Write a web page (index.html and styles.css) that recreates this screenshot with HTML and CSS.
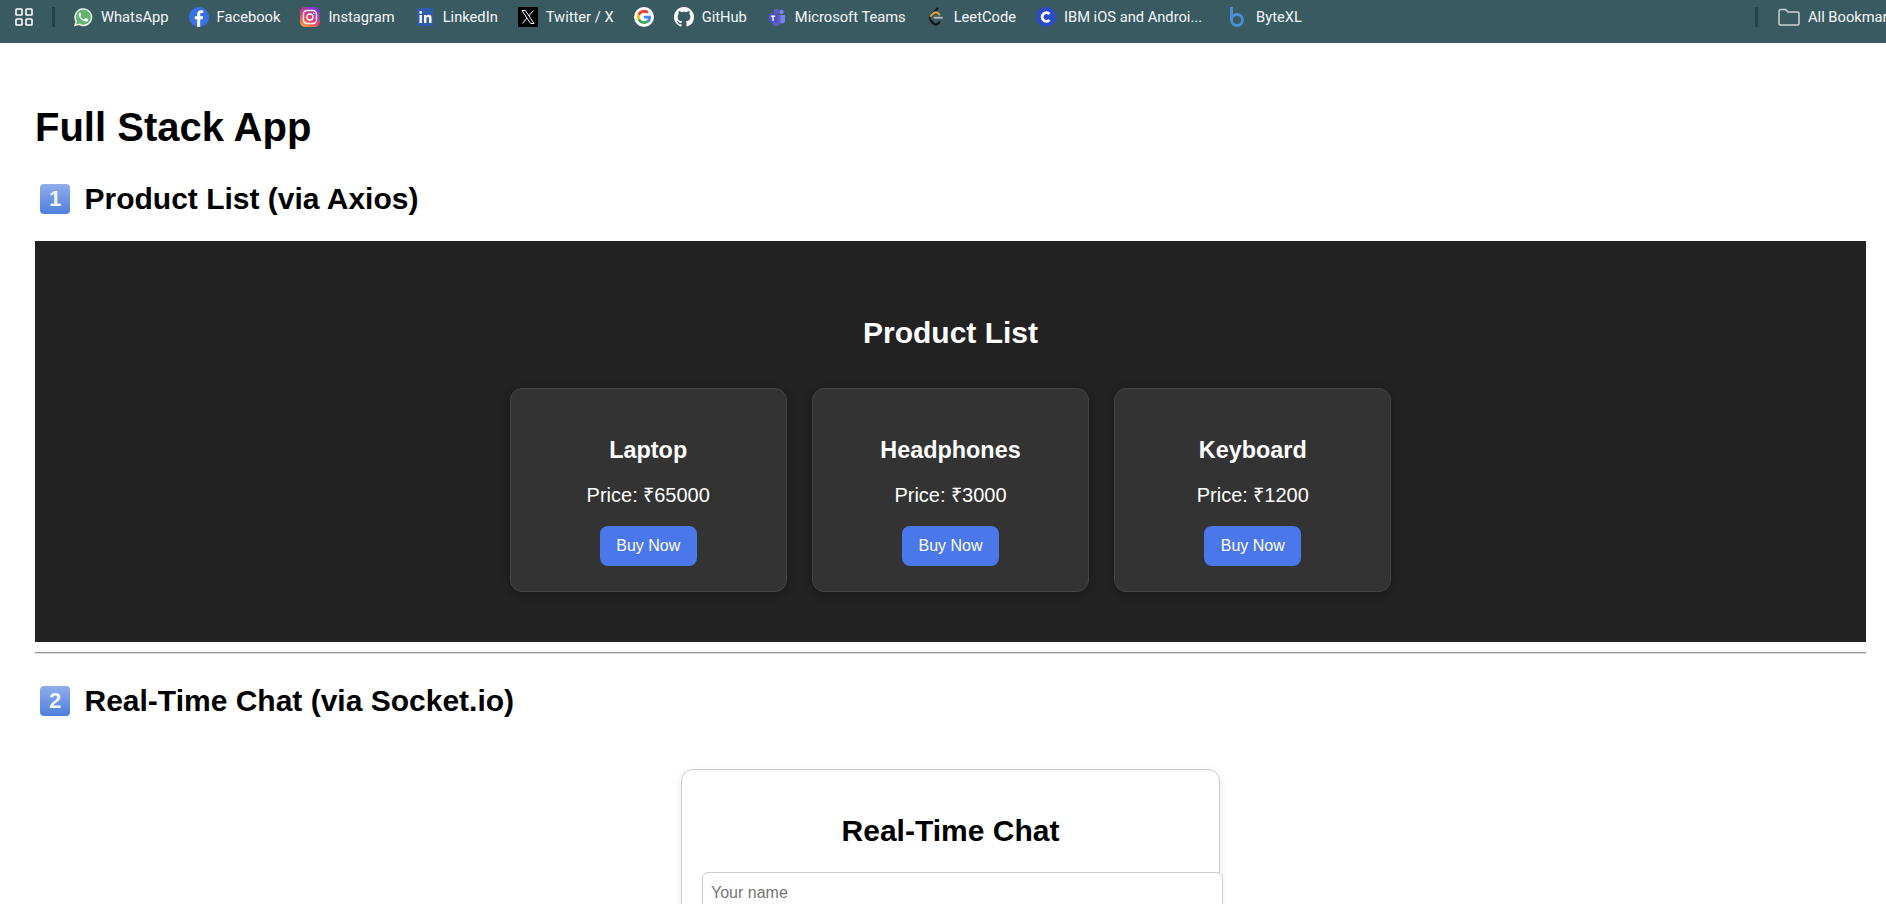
FILE: index.html
```html
<!DOCTYPE html>
<html lang="en">
<head>
<meta charset="utf-8">
<title>Full Stack App</title>
<link rel="stylesheet" href="styles.css">
</head>
<body>
<nav class="bookmarks">
  <div class="bm-left">
    <svg class="apps" viewBox="0 0 18 18" width="18" height="18" fill="none" stroke="#fff" stroke-width="1.6"><rect x="1" y="1" width="6" height="6" rx=".8"/><rect x="11" y="1" width="6" height="6" rx=".8"/><rect x="1" y="11" width="6" height="6" rx=".8"/><rect x="11" y="11" width="6" height="6" rx=".8"/></svg>
    <span class="sep"></span>
    <a class="bm"><svg viewBox="0 0 20 20" width="20" height="20"><path d="M1 19.500l1.400-5A9 9 0 1 1 5.800 18z" fill="#f2f6f2"/><path d="M3 17.500l1-3.300A7.500 7.500 0 1 1 6.300 16.500z" fill="#62b56f"/><path d="M7.300 5.600c-.5 0-1.500.8-1.500 2.300 0 1.700 1.300 3.400 2.800 4.700 1.500 1.300 3.200 2 4.300 2 1.200 0 2.200-1 2.200-1.900 0-.5-.1-.6-.4-.7l-1.900-.9c-.3-.1-.5 0-.7.300l-.7.900c-.2.200-.4.200-.7.100-1.400-.6-2.600-1.700-3.300-3-.1-.3 0-.4.200-.6l.5-.7c.1-.2.100-.4 0-.6l-.8-1.900c-.1-.3-.3-.4-.5-.4z" fill="#fff"/></svg><span>WhatsApp</span></a>
    <a class="bm"><svg viewBox="0 0 20 20" width="20" height="20"><circle cx="10" cy="10" r="10" fill="#3b6fe8"/><path d="M11.200 20v-7.800h2.500l.4-3h-2.900V7.500c0-.9.300-1.400 1.500-1.400h1.500V3.400c-.3 0-1.200-.1-2.200-.1-2.300 0-3.800 1.300-3.800 3.800v2.100H5.800v3h2.400V20z" fill="#fff"/></svg><span>Facebook</span></a>
    <a class="bm"><svg viewBox="0 0 20 20" width="20" height="20"><defs><linearGradient id="ig" x1="0" y1="1" x2=".6" y2="0"><stop offset="0" stop-color="#f9b233"/><stop offset=".5" stop-color="#e8406a"/><stop offset="1" stop-color="#7a35d0"/></linearGradient></defs><rect width="20" height="20" rx="5" fill="url(#ig)"/><rect x="3.500" y="3.500" width="13" height="13" rx="3.500" fill="none" stroke="#fff" stroke-width="1.400"/><circle cx="10" cy="10" r="3" fill="none" stroke="#fff" stroke-width="1.400"/><circle cx="13.800" cy="6.200" r=".8" fill="#fff"/></svg><span>Instagram</span></a>
    <a class="bm"><svg viewBox="0 0 20 20" width="20" height="20"><rect x="2" y="1" width="16" height="18" fill="#2f5ba8"/><rect x="4.500" y="8" width="2.400" height="8" fill="#fff"/><circle cx="5.700" cy="5.500" r="1.400" fill="#fff"/><path d="M9 8h2.300v1.100C11.800 8.300 12.700 7.800 13.700 7.800c2 0 2.800 1.200 2.800 3.200v5h-2.400v-4.500c0-1-.3-1.600-1.200-1.600-1 0-1.500.7-1.500 1.700V16H9z" fill="#fff"/></svg><span>LinkedIn</span></a>
    <a class="bm"><svg viewBox="0 0 20 20" width="20" height="20"><rect width="20" height="20" fill="#000"/><path d="M4 3.500h3.400l8.600 13h-3.400zM15.500 3.500L10.800 9M9 11l-4.600 5.500" fill="none" stroke="#fff" stroke-width="1"/></svg><span>Twitter / X</span></a>
    <a class="bm"><svg viewBox="0 0 20 20" width="20" height="20"><circle cx="10" cy="10" r="10" fill="#fff"/><path d="M17 10.200c0-.6-.1-1-.2-1.400H10v2.700h3.900c-.2 1-.7 1.700-1.400 2.200l2.200 1.700c1.400-1.200 2.300-3 2.300-5.200z" fill="#4285f4"/><path d="M10 17c1.900 0 3.500-.6 4.700-1.700l-2.200-1.700c-.6.400-1.500.7-2.500.7-1.900 0-3.500-1.300-4.100-3l-2.300 1.800C4.800 15.400 7.200 17 10 17z" fill="#34a853"/><path d="M5.900 11.300a4.300 4.300 0 0 1 0-2.700L3.600 6.800a7 7 0 0 0 0 6.300z" fill="#fbbc05"/><path d="M10 5.700c1.100 0 2 .4 2.800 1.100l2-2A7 7 0 0 0 3.600 6.800l2.300 1.800c.6-1.700 2.200-2.900 4.100-2.900z" fill="#ea4335"/></svg></a>
    <a class="bm"><svg viewBox="0 0 16 16" width="20" height="20"><path d="M8 0C3.580 0 0 3.580 0 8c0 3.540 2.290 6.530 5.470 7.590.4.070.55-.17.55-.38 0-.19-.01-.82-.01-1.490-2.010.37-2.530-.49-2.690-.94-.09-.23-.48-.94-.82-1.130-.28-.15-.68-.52-.01-.53.63-.01 1.080.58 1.230.82.72 1.210 1.870.87 2.330.66.070-.52.28-.87.51-1.070-1.780-.2-3.640-.89-3.640-3.950 0-.87.31-1.590.82-2.150-.08-.2-.36-1.020.08-2.120 0 0 .67-.21 2.200.82.64-.18 1.320-.27 2-.27.68 0 1.360.090 2 .27 1.530-1.040 2.200-.82 2.200-.82.44 1.100.16 1.920.08 2.120.51.56.82 1.270.82 2.150 0 3.070-1.870 3.750-3.650 3.950.29.25.54.73.54 1.480 0 1.070-.01 1.930-.01 2.200 0 .21.15.46.55.38A8.013 8.013 0 0016 8c0-4.420-3.580-8-8-8z" fill="#fff"/></svg><span>GitHub</span></a>
    <a class="bm"><svg viewBox="0 0 20 20" width="20" height="20"><circle cx="14.500" cy="5" r="2.200" fill="#7b83eb"/><path d="M11.500 8h6.500v5.500a3 3 0 0 1-6 0z" fill="#7b83eb"/><circle cx="9.500" cy="4.500" r="2.700" fill="#5b5fc7"/><path d="M5.500 8h8v7a4 4 0 0 1-8 0z" fill="#5b5fc7"/><rect x="1.500" y="6.500" width="9" height="9" rx="1" fill="#4b53bc"/><rect x="5.300" y="9" width="1.400" height="5" fill="#fff"/><rect x="3.800" y="8.500" width="4.400" height="1.300" fill="#fff"/></svg><span>Microsoft Teams</span></a>
    <a class="bm"><svg viewBox="0 0 20 20" width="20" height="20" fill="none" stroke-width="2" stroke-linecap="round" stroke-linejoin="round"><path d="M11.500 1.500L4.500 9" stroke="#111"/><path d="M4.500 9c-1.200 1.500-1 3.200.2 4.500" stroke="#222"/><path d="M4.700 13.500l2.800 3c1.300 1.300 3.200 1.300 4.600 0l1.400-1.300" stroke="#111"/><path d="M4.700 9l2.800-2.700c1.200-1.200 3.200-1.200 4.500 0l1.400 1.300" stroke="#e0a33a"/><path d="M8.500 10.800h7.500" stroke="#b3b3b3"/></svg><span>LeetCode</span></a>
    <a class="bm"><svg viewBox="0 0 20 20" width="20" height="20"><circle cx="10" cy="10" r="10" fill="#2c4ac8"/><path d="M13.500 7a4.300 4.300 0 1 0 0 6" fill="none" stroke="#fff" stroke-width="2.800"/></svg><span>IBM iOS and Androi...</span></a>
    <a class="bm bm-byte"><svg viewBox="0 0 20 20" width="20" height="20" fill="none" stroke="#4a90d9" stroke-width="2.800"><path d="M3.500 0v13"/><circle cx="9" cy="13" r="5.500"/></svg><span>ByteXL</span></a>
  </div>
  <div class="bm-right">
    <span class="sep"></span>
    <a class="bm"><svg viewBox="0 0 22 18" width="22" height="18" fill="none" stroke="#c8d2d4" stroke-width="1.500"><path d="M1 3a1.500 1.500 0 0 1 1.500-1.500h5l2.500 2.500h9.500A1.500 1.500 0 0 1 21 5.500v10a1.500 1.500 0 0 1-1.500 1.500h-17A1.500 1.500 0 0 1 1 15.500z"/></svg><span>All Bookmarks</span></a>
  </div>
</nav>
<main class="page">
  <h1>Full Stack App</h1>
  <h2 class="section"><span class="keycap">1</span>Product List (via Axios)</h2>
  <section class="products">
    <h2>Product List</h2>
    <div class="cards">
      <article class="card"><h3>Laptop</h3><p>Price: ₹65000</p><button>Buy Now</button></article>
      <article class="card"><h3>Headphones</h3><p>Price: ₹3000</p><button>Buy Now</button></article>
      <article class="card"><h3>Keyboard</h3><p>Price: ₹1200</p><button>Buy Now</button></article>
    </div>
  </section>
  <hr>
  <h2 class="section"><span class="keycap">2</span>Real-Time Chat (via Socket.io)</h2>
  <section class="chat">
    <h2>Real-Time Chat</h2>
    <input type="text" placeholder="Your name">
  </section>
</main>
</body>
</html>
```
FILE: styles.css
```css
html, body { margin: 0; height: 904px; overflow: hidden; background: #fff; }
body { font-family: "Liberation Sans", Arial, sans-serif; font-size: 20px; color: #000; }

.bookmarks { height: 43px; box-sizing: border-box; padding-bottom: 9px; background: #3a5a62; display: grid; grid-template-columns: 1755px auto; align-items: center; overflow: hidden; white-space: nowrap; color: #f4f7f8; font-family: Roboto, sans-serif; font-size: 14.700px; }
.bm-left, .bm-right { display: flex; align-items: center; }
.bm-left { padding-left: 15px; }
.apps { margin-right: 19px; }
.sep { width: 3px; height: 20px; background: #24424a; flex: none; }
.bm-left .sep { margin-right: 18px; }
.bm-right .sep { margin-right: 20px; }
.bm { display: flex; align-items: center; gap: 8px; margin-right: 20px; flex: none; }
.bm svg { flex: none; }
.bm-byte { margin-left: 6px; }

.page { padding: 0 20px 35px 35px; }
h1 { font-size: 40px; line-height: 46px; margin: 61px 0 30px; }
.section { font-size: 30px; line-height: 38px; margin: 0 0 23px; display: flex; align-items: center; }
.keycap { width: 30px; height: 30px; border-radius: 4px; margin: 0 14.500px 0 5px; background: linear-gradient(180deg, #8fadea, #4f7fdc); color: #f0f4fc; font-size: 22px; line-height: 30px; text-align: center; flex: none; }

.products { background: #222; padding: 50px; color: #fff; text-align: center; }
.products h2 { font-size: 30px; line-height: 34px; margin: 25px 0 0; }
.cards { display: flex; justify-content: center; gap: 25.600px; margin-top: 38px; }
.card { width: 276.700px; box-sizing: border-box; background: #333; border: 1px solid #444; border-radius: 12px; padding: 25px; box-shadow: 0 2px 8px rgba(0,0,0,.25); }
.card h3 { font-size: 23.400px; line-height: 27px; margin: 23px 0 20px; }
.card p { font-size: 20px; line-height: 23px; margin: 0 0 19px; }
.card button { display: block; margin: 0 auto; width: 97px; height: 40px; border: 0; border-radius: 8px; background: #4a78ea; color: #fff; font: 16px "Liberation Sans", Arial, sans-serif; padding: 0; }

hr { border: 0; border-top: 1px solid #999; border-bottom: 1px solid #ddd; margin: 10px 0 28px; }

.chat { width: 539px; box-sizing: border-box; margin: 49px auto 0; border: 1px solid #ccc; border-radius: 12px; padding: 20px; box-shadow: 0 2px 10px rgba(0,0,0,.08); text-align: center; height: 400px; }
.chat h2 { font-size: 30px; line-height: 34px; margin: 24px 0 24px; }
.chat input { display: block; width: 100%; padding: 11px 14px 13px 8px; border: 1px solid #ccc; border-radius: 6px; font: 16px "Liberation Sans", Arial, sans-serif; background: #fff; }
.chat input::placeholder { color: #757575; }
```
